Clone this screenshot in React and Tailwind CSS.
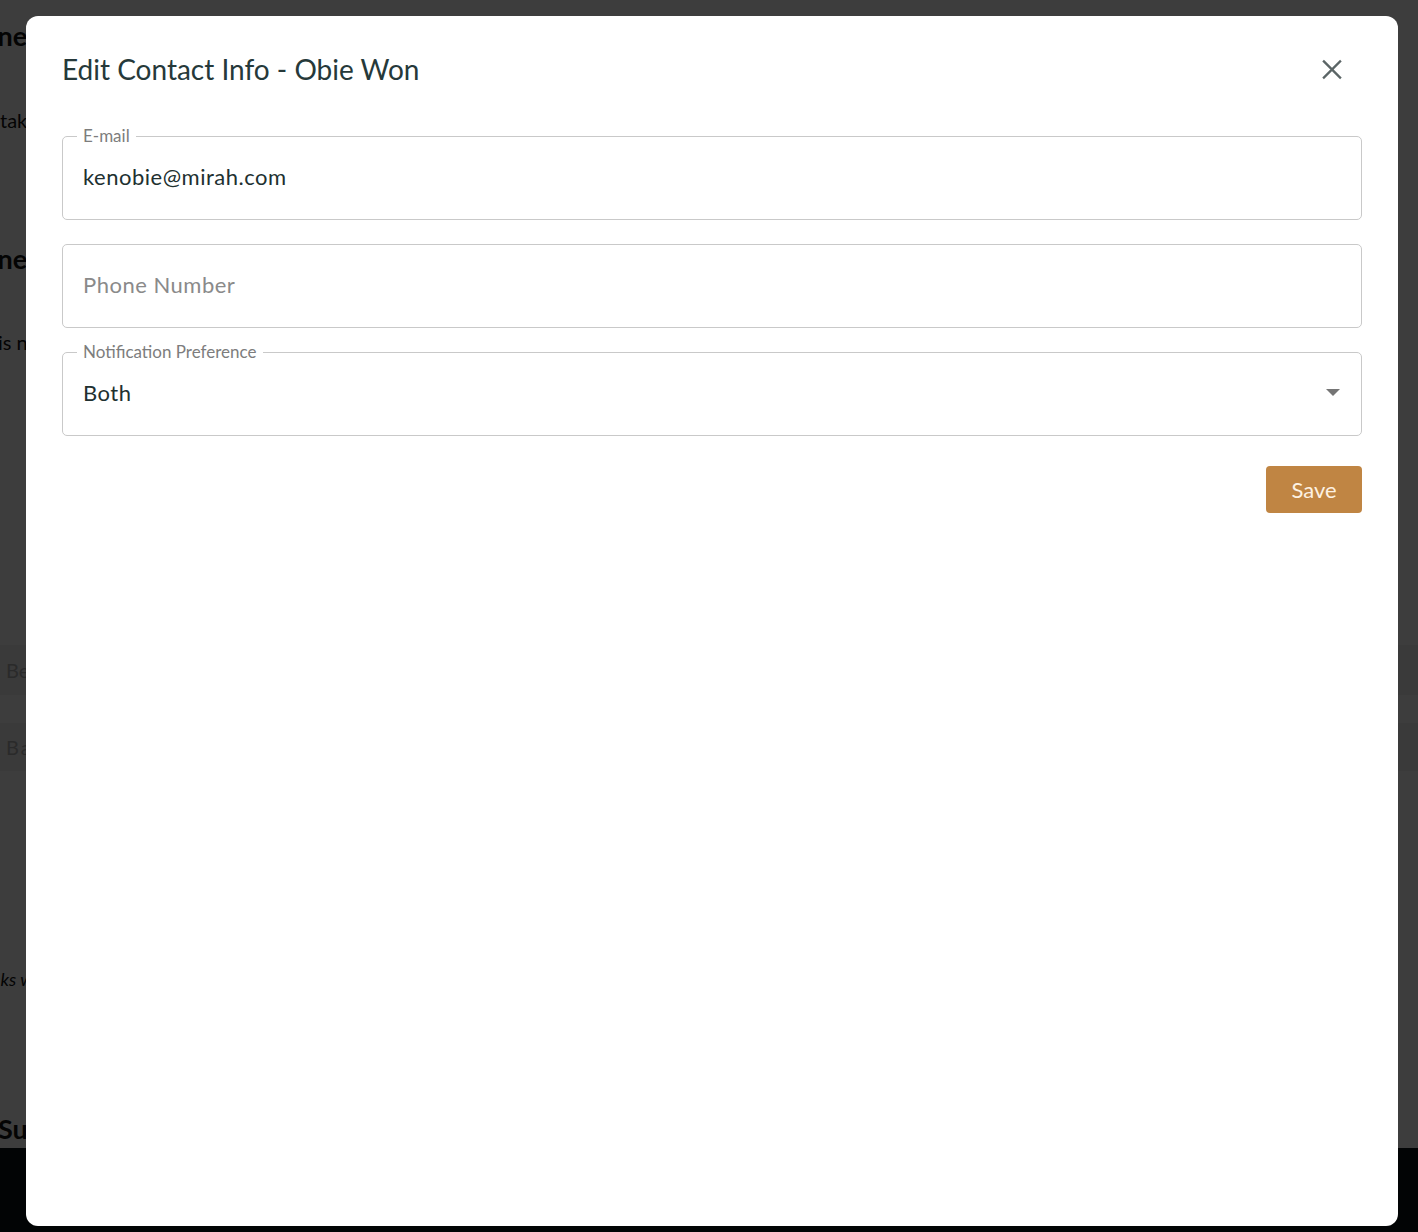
import React from "react";

const font = { fontFamily: "Lato, 'Open Sans', sans-serif" };

function OutlinedField({ label, value, placeholder, select }) {
  return (
    <div className="relative h-[84px] rounded-[5px] border border-[#c9c9c9] px-[20px] pb-[3px] flex items-center">
      {label && (
        <span className="absolute left-[14px] top-[-12px] bg-white px-[6px] text-[17px] leading-[22px] text-[#7d7d7d]">
          {label}
        </span>
      )}
      {value ? (
        <span className="text-[22px] tracking-[0.5px] text-[#213030]">{value}</span>
      ) : (
        <span className="text-[22px] tracking-[0.5px] text-[#8a8a8a]">{placeholder}</span>
      )}
      {select && (
        <span className="ml-auto mr-[1px] h-0 w-0 border-x-[7px] border-t-[7px] border-x-transparent border-t-[#757575]" />
      )}
    </div>
  );
}

function BackgroundPage() {
  return (
    <div className="flex h-full flex-col text-[#111]">
      <div className="flex-1 overflow-hidden pt-[19px]">
        <div className="-ml-[50px] text-[27px] font-bold leading-[34px]">Phone</div>
        <div className="mt-[53px] text-[20px] leading-[28px]">taking</div>
        <div className="mt-[108px] -ml-[50px] text-[27px] font-bold leading-[34px]">Phone</div>
        <div className="mt-[52px] -ml-[2px] text-[20px] leading-[28px]">is not</div>
        <div className="mt-[289px] h-[50px] bg-[#f2f2f2] flex items-center pl-[6px] text-[20px] text-[#b0b0b0]">Before</div>
        <div className="mt-[28px] h-[48px] bg-[#f2f2f2] flex items-center pl-[6px] text-[20px] text-[#b0b0b0] tracking-[2px]">Baseline</div>
        <div className="mt-[195px] -ml-[33px] text-[18px] italic leading-[26px]">Weeks with</div>
        <div className="mt-[120px] -ml-[2px] text-[27px] font-bold leading-[34px]">Summary</div>
      </div>
      <div className="h-[84px] shrink-0 bg-[#0c1117]" />
    </div>
  );
}

export default function App() {
  return (
    <div className="relative h-[1232px] w-full overflow-hidden bg-white" style={font}>
      <BackgroundPage />
      <div className="absolute inset-0 bg-black/[0.76]" />
      <div className="absolute left-[26px] top-[16px] right-[20px] bottom-[6px] rounded-[12px] bg-white px-[36px] pt-[35px]">
        <div className="flex items-center justify-between">
          <h2 className="text-[28px] leading-[36px] text-[#26393a]">Edit Contact Info - Obie Won</h2>
          <button className="mr-[20px] flex h-[20px] w-[20px] items-center justify-center" aria-label="Close">
            <svg width="21" height="21" viewBox="0 0 21 21" fill="none" stroke="#5b6566" strokeWidth="2.4" strokeLinecap="square">
              <path d="M2 2 L19 19 M19 2 L2 19" />
            </svg>
          </button>
        </div>

        <div className="mt-[49px] flex flex-col gap-[24px]">
          <OutlinedField label="E-mail" value="kenobie@mirah.com" />
          <OutlinedField placeholder="Phone Number" />
          <OutlinedField label="Notification Preference" value="Both" select />
        </div>

        <div className="mt-[30px] flex justify-end">
          <button className="h-[47px] w-[96px] rounded-[4px] bg-[#c08543] text-[22px] text-[#fdf1e2]">Save</button>
        </div>
      </div>
    </div>
  );
}
